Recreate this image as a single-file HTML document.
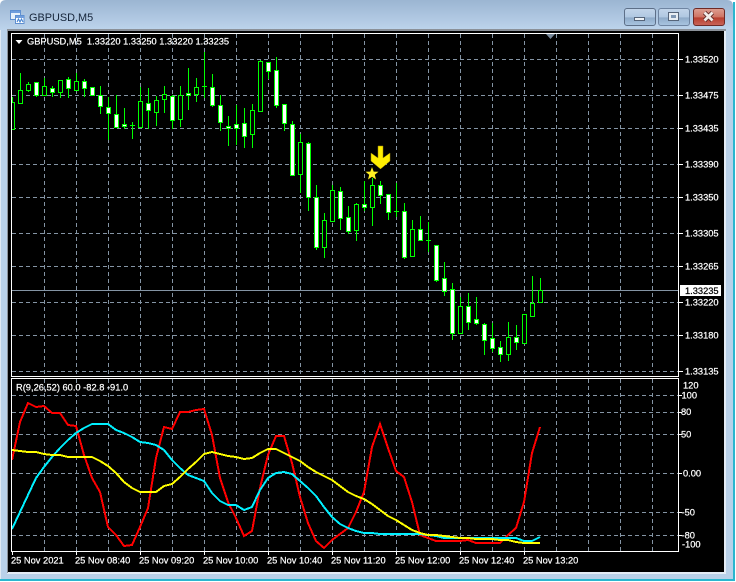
<!DOCTYPE html>
<html><head><meta charset="utf-8"><title>GBPUSD,M5</title>
<style>
html,body{margin:0;padding:0;background:#fff;width:736px;height:582px;overflow:hidden}
svg{display:block}
text{font-family:"Liberation Sans",sans-serif;font-size:9.3px;fill:#fff;stroke:#fff;stroke-width:.22px}
</style></head><body>
<svg width="736" height="582" viewBox="0 0 736 582" xmlns="http://www.w3.org/2000/svg">
<defs>
<linearGradient id="tb" x1="0" y1="0" x2="0" y2="1"><stop offset="0" stop-color="#9bb5d2"/><stop offset="1" stop-color="#bdd4ec"/></linearGradient>
<linearGradient id="btn" x1="0" y1="0" x2="0" y2="1"><stop offset="0" stop-color="#c2d5ea"/><stop offset=".5" stop-color="#b0c8e2"/><stop offset=".55" stop-color="#8fabc9"/><stop offset="1" stop-color="#aac6e2"/></linearGradient>
<linearGradient id="cl" x1="0" y1="0" x2="0" y2="1"><stop offset="0" stop-color="#dd9f92"/><stop offset=".5" stop-color="#cf7464"/><stop offset=".55" stop-color="#b83e2e"/><stop offset="1" stop-color="#c9655a"/></linearGradient>
<clipPath id="mc"><rect x="12" y="34" width="667" height="342"/></clipPath>
</defs>
<!-- window frame -->
<rect x="0" y="30" width="733" height="549" fill="#b9d1e9"/>
<path d="M0 30V6Q0 0 6 0H727Q733 0 733 6V30Z" fill="url(#tb)"/>
<rect x="733" y="2" width="2" height="579" fill="#2bb6cf"/>
<rect x="0" y="579" width="735" height="2" fill="#2bb6cf"/>
<rect x="0" y="30" width="1" height="549" fill="#dfe9f3"/>
<!-- client -->
<rect x="7" y="29" width="719" height="545" fill="#e4edf6"/>
<rect x="7" y="29" width="719" height="2" fill="#8b9199"/>
<rect x="7" y="30" width="1" height="543" fill="#8b9199"/>
<rect x="8" y="31" width="716" height="541" fill="#000"/>
<!-- title icon -->
<g shape-rendering="crispEdges">
<rect x="10.5" y="10.5" width="10" height="9" fill="#e8f1fb" stroke="#5f8fd0"/>
<rect x="11" y="11" width="9" height="2" fill="#6f9ddd"/>
<rect x="15.5" y="15.5" width="8.5" height="8" fill="#fff" stroke="#5f8fd0"/>
<rect x="16" y="16" width="8" height="2" fill="#6f9ddd"/>
</g>
<path d="M17 22l1.500-3 1.500 3 1.500-3 1.500 3" fill="none" stroke="#3f7fd0" stroke-width="1"/>
<text x="29" y="21" style="font-size:10.9px;fill:#16253a;stroke:none">GBPUSD,M5</text>
<!-- buttons -->
<rect x="624.500" y="8.500" width="31" height="17" rx="2.500" fill="url(#btn)" stroke="#5d6f88"/>
<rect x="634.500" y="17.500" width="10" height="3" fill="#eef2f6" stroke="#56657a"/>
<rect x="658.500" y="8.500" width="31" height="17" rx="2.500" fill="url(#btn)" stroke="#6f85a2"/>
<rect x="668.500" y="12.500" width="10" height="8" fill="#e8eef4" stroke="#56657a"/>
<rect x="671" y="15" width="5" height="3" fill="#7f97b4"/>
<rect x="693.500" y="8.500" width="31" height="17" rx="2.500" fill="url(#cl)" stroke="#6e2a26"/>
<path d="M704.500 12.500l8 8m0-8l-8 8" stroke="#5d2a28" stroke-width="4.500" fill="none"/>
<path d="M704.500 12.500l8 8m0-8l-8 8" stroke="#f2ece8" stroke-width="2.800" fill="none"/>
<!-- grid -->
<g fill="none" stroke="#8494a4" stroke-width="1" stroke-dasharray="4 3" shape-rendering="crispEdges">
<path d="M12 59.500H679M12 95.500H679M12 128.500H679M12 164.500H679M12 197.500H679M12 233.500H679M12 266.500H679M12 302.500H679M12 335.500H679M12 371.500H679"/>
<path d="M44.500 34V376M76.500 34V376M108.500 34V376M140.500 34V376M172.500 34V376M204.500 34V376M236.500 34V376M268.500 34V376M300.500 34V376M332.500 34V376M364.500 34V376M396.500 34V376M428.500 34V376M460.500 34V376M492.500 34V376M524.500 34V376M556.500 34V376M588.500 34V376M620.500 34V376M652.500 34V376"/>
<path d="M12 395.500H679M12 412.500H679M12 434.500H679M12 473.500H679M12 512.500H679M12 535.500H679"/>
<path d="M44.500 379V551M76.500 379V551M108.500 379V551M140.500 379V551M172.500 379V551M204.500 379V551M236.500 379V551M268.500 379V551M300.500 379V551M332.500 379V551M364.500 379V551M396.500 379V551M428.500 379V551M460.500 379V551M492.500 379V551M524.500 379V551M556.500 379V551M588.500 379V551M620.500 379V551M652.500 379V551"/>
</g>
<path d="M12 290.500H679" stroke="#8494a4" stroke-width="1" shape-rendering="crispEdges"/>
<path d="M546 34H555L550.500 39Z" fill="#778899"/>
<!-- candles -->
<g clip-path="url(#mc)" shape-rendering="crispEdges">
<path fill="none" stroke="#00ff00" stroke-width="1" d="M12.500 97V129M20.500 73V104M28.500 82V92M36.500 82V97M44.500 78V96M52.500 86V97M60.500 80V98M68.500 77V98M76.500 73V91M84.500 79V97M92.500 87V96M100.500 86V114M108.500 97V140M116.500 95V128M124.500 108V129M132.500 122V139M140.500 87V128M148.500 88V129M156.500 96V126M164.500 86V113M172.500 95V129M180.500 86V127M188.500 68V110M196.500 78V102M204.500 52V98M212.500 74V107M220.500 95V131M228.500 116V146M236.500 105V145M244.500 108V148M252.500 104V148M260.500 60V112M268.500 62V79M276.500 57V108M284.500 104V131M292.500 121V176M300.500 134V193M308.500 142V211M316.500 185V250M324.500 213V258M332.500 185V222M340.500 187V230M348.500 206V234M356.500 203V241M364.500 181V211M372.500 178V226M380.500 181V204M388.500 194V220M396.500 183V217M404.500 203V259M412.500 220V257M420.500 216V241M428.500 222V252M436.500 245V282M444.500 262V296M452.500 283V340M460.500 297V333M468.500 293V330M476.500 297V325M484.500 323V355M492.500 323V352M500.500 341V362M508.500 322V361M516.500 325V350M524.500 314V343M532.500 276V316M540.500 278V302M130 125.500H135M202 86.500H207M394 211.500H399M426 240.500H431"/>
<path fill="#000" stroke="#00ff00" stroke-width="1" d="M10.500 102.500h4v27h-4zM18.500 90.500h4v13h-4zM26.500 84.500h4v6h-4zM42.500 86.500h4v9h-4zM58.500 80.500h4v12h-4zM74.500 81.500h4v9h-4zM138.500 101.500h4v26h-4zM154.500 100.500h4v12h-4zM162.500 94.500h4v5h-4zM178.500 95.500h4v24h-4zM194.500 87.500h4v7h-4zM250.500 110.500h4v24h-4zM258.500 61.500h4v50h-4zM298.500 142.500h4v32h-4zM322.500 220.500h4v27h-4zM330.500 190.500h4v31h-4zM354.500 204.500h4v26h-4zM370.500 185.500h4v22h-4zM410.500 229.500h4v27h-4zM458.500 306.500h4v27h-4zM506.500 337.500h4v17h-4zM522.500 314.500h4v29h-4zM530.500 303.500h4v13h-4zM538.500 290.500h4v12h-4z"/>
<path fill="#fff" stroke="#00ff00" stroke-width="1" d="M34.500 82.500h4v13h-4zM50.500 88.500h4v4h-4zM66.500 79.500h4v9h-4zM82.500 81.500h4v7h-4zM90.500 87.500h4v8h-4zM98.500 95.500h4v11h-4zM106.500 107.500h4v6h-4zM114.500 114.500h4v13h-4zM122.500 124.500h4v2h-4zM146.500 103.500h4v7h-4zM170.500 96.500h4v24h-4zM186.500 93.500h4v2h-4zM210.500 87.500h4v18h-4zM218.500 105.500h4v17h-4zM226.500 126.500h4v2h-4zM234.500 124.500h4v4h-4zM242.500 123.500h4v13h-4zM266.500 62.500h4v9h-4zM274.500 70.500h4v35h-4zM282.500 104.500h4v19h-4zM290.500 124.500h4v51h-4zM306.500 143.500h4v54h-4zM314.500 197.500h4v50h-4zM338.500 191.500h4v27h-4zM346.500 217.500h4v14h-4zM362.500 204.500h4v3h-4zM378.500 185.500h4v10h-4zM386.500 194.500h4v18h-4zM402.500 211.500h4v46h-4zM418.500 229.500h4v11h-4zM434.500 245.500h4v35h-4zM442.500 278.500h4v13h-4zM450.500 289.500h4v44h-4zM466.500 306.500h4v16h-4zM474.500 319.500h4v4h-4zM482.500 324.500h4v16h-4zM490.500 338.500h4v10h-4zM498.500 347.500h4v7h-4zM514.500 337.500h4v5h-4z"/>
</g>
<!-- arrow + star -->
<path d="M378 146H383V158L390 153V161L380.500 169L371 161V153L378 158Z" fill="#ffee00" stroke="#a08a00" stroke-width=".5"/>
<path d="M372 167L373.700 171.600 378.500 171.800 374.800 174.800 376 179.500 372 176.800 368 179.500 369.200 174.800 365.500 171.800 370.300 171.600Z" fill="#ffee22"/>
<!-- sub-window curves -->
<g fill="none" stroke-width="2" stroke-linejoin="miter" shape-rendering="crispEdges">
<polyline stroke="#ff0000" points="12,460 20,422 28,403 36,407 44,406 52,413 60,413 68,425 76,426 84,455 92,478 100,492 108,527 116,535 124,546 132,545 140,527 148,508 156,458 164,427 172,429 180,412 188,412 196,410 204,409 212,435 220,478 228,502 236,518 244,536 252,531 260,488 268,455 276,436 284,436 292,463 300,497 308,523 316,541 324,548 332,540 340,534 348,528 356,512 364,492 372,447 380,424 388,448 396,471 404,477 412,502 420,535 428,538 436,541 444,541 452,541 460,541 468,540 476,543 484,543 492,543 500,543 508,535 516,528 524,502 532,453 540,427"/>
<polyline stroke="#00f0ff" points="12,529 20,512 28,495 36,478 44,467 52,457 60,448 68,440 76,433 84,428 92,424 100,424 108,424 116,430 124,433 132,437 140,442 148,443 156,445 164,450 172,460 180,468 188,475 196,478 204,481 212,493 220,501 228,505 236,505 244,510 252,507 260,490 268,478 276,473 284,472 292,474 300,481 308,488 316,496 324,507 332,517 340,524 348,528 356,531 364,533 372,533 380,534 420,534 428,535 436,536 444,538 484,538 516,538 524,541 532,541 540,537"/>
<polyline stroke="#ffff00" points="12,450 20,451 28,452 36,452 44,454 52,455 60,455 68,457 76,457 84,457 92,457 100,461 108,466 116,473 124,482 132,488 140,492 148,492 156,492 164,486 172,484 180,477 188,469 196,462 204,454 212,452 220,454 228,456 236,457 244,459 252,458 260,453 268,449 276,449 284,453 292,457 300,461 308,467 316,472 324,476 332,480 340,486 348,492 356,496 364,499 372,504 380,510 388,516 396,520 404,525 412,530 420,533 428,535 436,535 444,536 452,537 460,538 468,538 476,539 484,539 492,539 500,540 508,540 516,542 524,543 532,543 540,543"/>
</g>
<!-- borders -->
<g fill="none" stroke="#fff" stroke-width="1" shape-rendering="crispEdges">
<path d="M11.500 33.500H678.500V376.500H11.500Z"/>
<path d="M11.500 378.500H678.500V551.500H11.500Z"/>
<path d="M679 59.500h4M679 95.500h4M679 128.500h4M679 164.500h4M679 197.500h4M679 233.500h4M679 266.500h4M679 302.500h4M679 335.500h4M679 371.500h4M679 395.500h3M679 412.500h3M679 434.500h3M679 473.500h3M679 512.500h3M679 535.500h3"/>
<path d="M12.500 552v3M76.500 552v3M140.500 552v3M204.500 552v3M268.500 552v3M332.500 552v3M396.500 552v3M460.500 552v3M524.500 552v3"/>
</g>
<!-- header -->
<path d="M15.500 40H22.500L19 44Z" fill="#fff"/>
<text x="27" y="44.500">GBPUSD,M5&#160;&#160;1.33220 1.33250 1.33220 1.33235</text>
<text x="16" y="390.500">R(9,26,52) 60.0 -82.8 -91.0</text>
<!-- price labels -->
<text x="685" y="62.500">1.33520</text>
<text x="685" y="98.500">1.33475</text>
<text x="685" y="131.500">1.33435</text>
<text x="685" y="167.500">1.33390</text>
<text x="685" y="200.500">1.33350</text>
<text x="685" y="236.500">1.33305</text>
<text x="685" y="269.500">1.33265</text>
<text x="685" y="305.500">1.33220</text>
<text x="685" y="338.500">1.33180</text>
<text x="685" y="374.500">1.33135</text>
<rect x="680" y="285" width="41" height="11" fill="#fff"/>
<text x="685" y="294" style="fill:#000;stroke:#000">1.33235</text>
<!-- sub labels -->
<text x="683" y="388.500">120</text>
<text x="681.500" y="398.500">100</text>
<text x="681" y="415">80</text>
<text x="681" y="437.500">50</text>
<text x="683" y="476.500">0.00</text>
<text x="681.500" y="515.500">-50</text>
<text x="681.500" y="538.500">-80</text>
<text x="682" y="547.500">-100</text>
<!-- time labels -->
<text x="11" y="563.500">25 Nov 2021</text>
<text x="75" y="563.500">25 Nov 08:40</text>
<text x="139" y="563.500">25 Nov 09:20</text>
<text x="203" y="563.500">25 Nov 10:00</text>
<text x="267" y="563.500">25 Nov 10:40</text>
<text x="331" y="563.500">25 Nov 11:20</text>
<text x="395" y="563.500">25 Nov 12:00</text>
<text x="459" y="563.500">25 Nov 12:40</text>
<text x="523" y="563.500">25 Nov 13:20</text>
</svg>
</body></html>
